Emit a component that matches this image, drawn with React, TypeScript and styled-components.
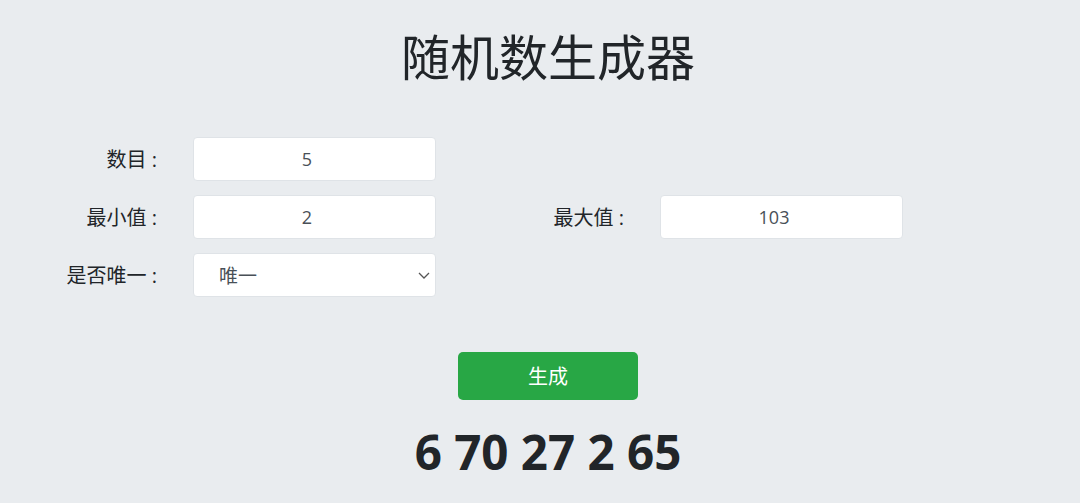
import React, { useState } from "react";
import styled, { createGlobalStyle } from "styled-components";

const GlobalStyle = createGlobalStyle`
  html, body {
    margin: 0;
    padding: 0;
    background: #e9ecef;
  }
  body {
    font-family: "Open Sans", "Noto Sans CJK SC", sans-serif;
    color: #212529;
  }
  input[type="number"]::-webkit-inner-spin-button {
    opacity: 0;
  }
`;

const Page = styled.div`
  width: 1080px;
  height: 503px;
  box-sizing: border-box;
  padding: 26px 0 0 16px;
  display: flex;
  flex-direction: column;
  align-items: center;
`;

const Title = styled.h1`
  margin: 0;
  font-size: 49px;
  font-weight: 400;
  line-height: 1.2;
  font-family: "Noto Sans CJK SC", sans-serif;
`;

const FormGrid = styled.div`
  align-self: flex-start;
  margin-top: 52px;
  display: grid;
  grid-template-columns: 150px 243px 170px 243px;
  grid-auto-rows: 44px;
  column-gap: 27px;
  row-gap: 14px;
`;

const Label = styled.label`
  display: flex;
  align-items: center;
  justify-content: flex-end;
  padding-right: 9px;
  font-size: 20px;
  font-family: "Open Sans", "Noto Sans CJK SC", sans-serif;
  color: #212529;
  white-space: pre;
`;

const Spacer = styled.div<{ $span: number }>`
  grid-column: span ${(p) => p.$span};
`;

const NumberInput = styled.input`
  box-sizing: border-box;
  width: 100%;
  height: 44px;
  border: 1px solid #dfe3e7;
  border-radius: 4px;
  background: #ffffff;
  text-align: center;
  font-family: "Open Sans", sans-serif;
  font-size: 18px;
  color: #495057;
  padding: 0 12px;
  outline: none;
`;

const SelectWrap = styled.div`
  position: relative;
`;

const Select = styled.select`
  box-sizing: border-box;
  width: 100%;
  height: 44px;
  appearance: none;
  border: 1px solid #dfe3e7;
  border-radius: 4px;
  background: #ffffff;
  font-family: "Noto Sans CJK SC", sans-serif;
  font-size: 19px;
  color: #495057;
  padding: 0 30px 0 25px;
  outline: none;
`;

const Chevron = styled.svg`
  position: absolute;
  right: 6px;
  top: 19px;
  pointer-events: none;
`;

const GenerateButton = styled.button`
  margin-top: 55px;
  width: 180px;
  height: 48px;
  border: none;
  border-radius: 5px;
  background: #28a745;
  color: #ffffff;
  font-family: "Noto Sans CJK SC", sans-serif;
  font-size: 20px;
  cursor: pointer;
`;

const Result = styled.div`
  margin-top: 23px;
  font-family: "Open Sans", sans-serif;
  font-weight: 700;
  font-size: 47.5px;
  line-height: 1.2;
  color: #212529;
`;

export default function App() {
  const [count, setCount] = useState("5");
  const [min, setMin] = useState("2");
  const [max, setMax] = useState("103");
  const [unique, setUnique] = useState("yes");
  const [result] = useState([6, 70, 27, 2, 65]);

  return (
    <>
      <GlobalStyle />
      <Page>
        <Title>随机数生成器</Title>
        <FormGrid>
          <Label>数目 :</Label>
          <NumberInput type="number" value={count} onChange={(e) => setCount(e.target.value)} />
          <Spacer $span={2} />

          <Label>最小值 :</Label>
          <NumberInput type="number" value={min} onChange={(e) => setMin(e.target.value)} />
          <Label>最大值 :</Label>
          <NumberInput type="number" value={max} onChange={(e) => setMax(e.target.value)} />

          <Label>是否唯一 :</Label>
          <SelectWrap>
            <Select value={unique} onChange={(e) => setUnique(e.target.value)}>
              <option value="yes">唯一</option>
              <option value="no">不唯一</option>
            </Select>
            <Chevron width="12" height="7" viewBox="0 0 12 7">
              <path d="M1 1l5 5 5-5" fill="none" stroke="#555" strokeWidth="1.3" />
            </Chevron>
          </SelectWrap>
          <Spacer $span={2} />
        </FormGrid>
        <GenerateButton>生成</GenerateButton>
        <Result>{result.join(" ")}</Result>
      </Page>
    </>
  );
}
